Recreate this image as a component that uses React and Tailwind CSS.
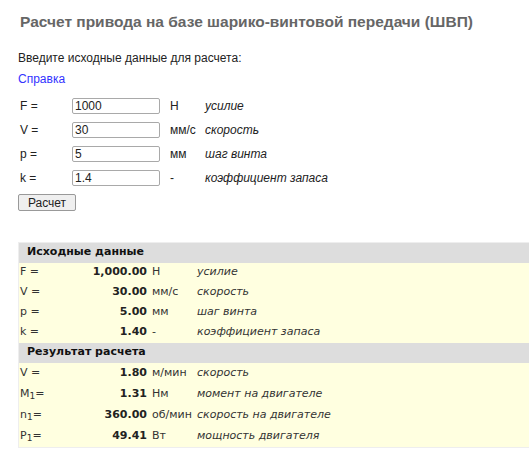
import React from "react";

const inputs = [
  { label: "F =", value: "1000", unit: "Н", desc: "усилие" },
  { label: "V =", value: "30", unit: "мм/с", desc: "скорость" },
  { label: "p =", value: "5", unit: "мм", desc: "шаг винта" },
  { label: "k =", value: "1.4", unit: "-", desc: "коэффициент запаса" },
];

const source = [
  { label: "F =", value: "1,000.00", unit: "Н", desc: "усилие" },
  { label: "V =", value: "30.00", unit: "мм/с", desc: "скорость" },
  { label: "p =", value: "5.00", unit: "мм", desc: "шаг винта" },
  { label: "k =", value: "1.40", unit: "-", desc: "коэффициент запаса" },
];

const result = [
  { label: "V =", sub: null, value: "1.80", unit: "м/мин", desc: "скорость" },
  { label: "M", sub: "1", value: "1.31", unit: "Нм", desc: "момент на двигателе" },
  { label: "n", sub: "1", value: "360.00", unit: "об/мин", desc: "скорость на двигателе" },
  { label: "P", sub: "1", value: "49.41", unit: "Вт", desc: "мощность двигателя" },
];

function Row({ row, h }) {
  return (
    <div className={`flex items-center bg-[#ffffe0] ${h} text-[11px] text-[#333]`}>
      <div className="w-[73px] pl-[1px]">
        {row.sub ? (
          <span>
            {row.label}
            <sub className="text-[9px]">{row.sub}</sub>=
          </span>
        ) : (
          row.label
        )}
      </div>
      <div className="w-[55px] text-right font-bold text-[#222]">{row.value}</div>
      <div className="w-[50px] pl-[5px]">{row.unit}</div>
      <div className="italic">{row.desc}</div>
    </div>
  );
}

function Header({ title }) {
  return (
    <div className="flex items-center h-[20px] bg-[#dddddd] pl-[8px] text-[11px] font-bold text-[#111]">
      {title}
    </div>
  );
}

export default function App() {
  return (
    <div className="w-[529px] h-[456px] overflow-hidden bg-white px-[18px] pt-[11px] font-['Liberation_Sans',Arial,sans-serif] text-[12px] text-[#222]">
      <h1 className="pl-[2px] text-[15.5px] leading-[22px] font-bold text-[#666] whitespace-nowrap">
        Расчет привода на базе шарико-винтовой передачи (ШВП)
      </h1>

      <p className="mt-[18px] leading-[14px]">Введите исходные данные для расчета:</p>
      <a href="#" className="block mt-[7px] leading-[14px] text-[#3333ff]">
        Справка
      </a>

      <div className="mt-[12px] flex flex-col gap-[8px] pl-[2px]">
        {inputs.map((r) => (
          <div key={r.label} className="flex items-center h-[16px]">
            <div className="w-[52px]">{r.label}</div>
            <input
              readOnly
              value={r.value}
              className="w-[88px] h-[16px] border border-[#a9a9a9] rounded-[2px] px-[2px] text-[12px] leading-[14px] outline-none"
            />
            <div className="w-[45px] pl-[10px]">{r.unit}</div>
            <div className="italic">{r.desc}</div>
          </div>
        ))}
      </div>

      <button className="mt-[8px] w-[58px] h-[17px] border border-[#999] rounded-[2px] bg-[#efefef] text-[12px] leading-[14px]">
        Расчет
      </button>

      <div className="mt-[30px] w-[520px] border border-[#eeeeee] font-['DejaVu_Sans',Verdana,sans-serif]">
        <Header title="Исходные данные" />
        {source.map((r) => (
          <Row key={r.label} row={r} h="h-[20px]" />
        ))}
        <Header title="Результат расчета" />
        {result.map((r) => (
          <Row key={r.label + r.unit} row={r} h="h-[21px]" />
        ))}
      </div>
    </div>
  );
}
